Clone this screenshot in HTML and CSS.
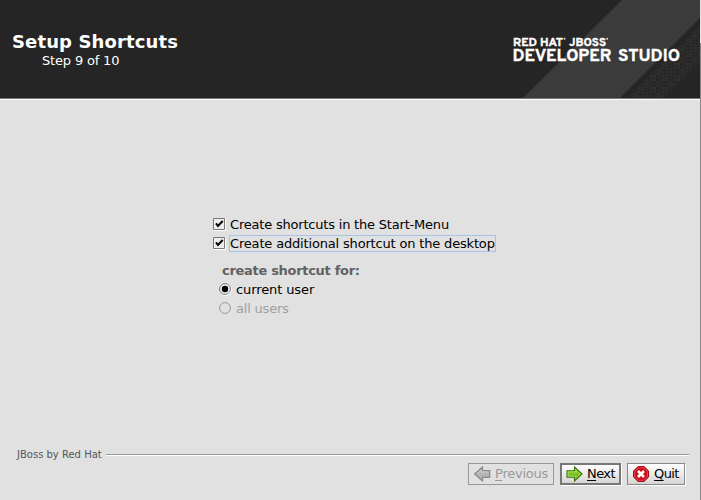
FILE: index.html
```html
<!DOCTYPE html>
<html lang="en">
<head>
<meta charset="utf-8">
<title>Setup Shortcuts</title>
<link rel="stylesheet" href="styles.css">
</head>
<body>
<div class="window">
  <header class="header">
    <div class="heading">
      <h1>Setup Shortcuts</h1>
      <p>Step 9 of 10</p>
    </div>
    <svg class="brand" width="201" height="98" viewBox="500 0 201 98">
      <defs>
        <pattern id="lattice" width="12" height="12" patternUnits="userSpaceOnUse">
          <path d="M0 3L3 0H9L12 3V9L9 12H3L0 9ZM0 0L12 12M12 0L0 12" fill="none" stroke="#343434" stroke-width=".8"/>
          <circle cx="6" cy="6" r="3" fill="none" stroke="#343434" stroke-width=".8"/>
        </pattern>
      </defs>
      <path d="M623 0H701V18L621 98H524Z" fill="#3b3b3b"/>
      <path d="M701 26V63L665 98H628Z" fill="url(#lattice)"/>
      <g class="brand-text">
        <text x="514" y="45.5" font-size="10.5" textLength="50" lengthAdjust="spacingAndGlyphs">RED HAT</text>
        <text x="570" y="45.5" font-size="10.5" textLength="37" lengthAdjust="spacingAndGlyphs">JBOSS</text>
        <text x="513.5" y="61" font-size="16" textLength="99" lengthAdjust="spacingAndGlyphs">DEVELOPER</text>
        <text x="619" y="61" font-size="16" textLength="62" lengthAdjust="spacingAndGlyphs">STUDIO</text>
      </g>
      <circle cx="565.5" cy="38.7" r="1" fill="#ddd"/>
      <circle cx="608.2" cy="38.7" r="1" fill="#ddd"/>
    </svg>
  </header>
  <main class="content">
    <label class="row"><svg class="mark" width="13" height="13"><path d="M12.5 1V12.5H1" fill="none" stroke="#fff"/><path d="M.5.5H11.5V11.5H.5Z" fill="#eee" stroke="#777"/><path d="M3 5.3L5 8L9.7 3" fill="none" stroke="#000" stroke-width="2"/></svg><span class="label">Create shortcuts in the Start-Menu</span></label>
    <label class="row"><svg class="mark" width="13" height="13"><path d="M12.5 1V12.5H1" fill="none" stroke="#fff"/><path d="M.5.5H11.5V11.5H.5Z" fill="#eee" stroke="#777"/><path d="M3 5.3L5 8L9.7 3" fill="none" stroke="#000" stroke-width="2"/></svg><span class="label focused">Create additional shortcut on the desktop</span></label>
    <h2>create shortcut for:</h2>
    <label class="row radio"><svg class="mark" width="13" height="13"><circle cx="6.8" cy="6.8" r="5.6" fill="#fff" stroke="#fff"/><circle cx="6" cy="6" r="5.4" fill="#eee" stroke="#777"/><circle cx="6" cy="6" r="3.2"/></svg><span class="label current">current user</span></label>
    <label class="row radio disabled"><svg class="mark" width="13" height="13"><circle cx="6" cy="6" r="5.4" fill="none" stroke="#999"/></svg><span class="label">all users</span></label>
  </main>
  <footer class="footer">
    <div class="divider"><span>JBoss by Red Hat</span><i></i></div>
    <div class="buttons">
      <button class="previous" disabled><svg width="17" height="16"><path d="M.7 8L8.5 1V4.7H15.7V11.3H8.5V15Z" fill="#b5b5b5" stroke="#888" stroke-width="1.2"/><path d="M3 8L7.3 4V6H14.2" fill="none" stroke="#ccc"/></svg><span><u>P</u>revious</span></button>
      <button class="next"><svg width="17" height="16"><defs><linearGradient id="green" x2="0" y2="1"><stop stop-color="#a4df3b"/><stop offset="1" stop-color="#55a616"/></linearGradient></defs><path d="M16 8L8.5 1V4.7H1V11.3H8.5V15Z" fill="url(#green)" stroke="#39750b" stroke-width="1.1"/><path d="M2.2 10.2V5.9H9.7V3.8L14.2 8L9.7 12.2V10.2Z" fill="none" stroke="#a9df5d" stroke-width=".8"/></svg><span><u>N</u>ext</span></button>
      <button class="quit"><svg width="17" height="16"><path d="M5 .6H11L15.6 5V11L11 15.4H5L.6 11V5Z" fill="#cc1019" stroke="#a4000a"/><path d="M5.4 1.7H10.6L14.5 5.4V10.6L10.6 14.3H5.4L1.6 10.6V5.4Z" fill="none" stroke="#e66068" stroke-width=".7"/><path d="M5 5L11 11M11 5L5 11" stroke="#fff" stroke-width="2.7"/></svg><span><u>Q</u>uit</span></button>
    </div>
  </footer>
</div>
</body>
</html>
```

FILE: styles.css
```css
* { box-sizing: border-box; }
body { margin: 0; font: 13px/19px "DejaVu Sans", sans-serif; color: #000; }
.window { width: 701px; height: 500px; display: flex; flex-direction: column; background: linear-gradient(#888, #888) 700px 43px / 1px 457px no-repeat, #e1e1e1; overflow: hidden; }
.header { width: 700px; height: 100px; display: flex; justify-content: space-between; background: #252525; border-bottom: 1px solid #fff; box-shadow: inset 0 -1px #777; color: #fff; }
.heading { padding: 31px 0 0 12px; }
h1 { margin: 0; font-size: 18px; line-height: 22px; letter-spacing: .13px; white-space: nowrap; }
.heading p { margin: 0 0 0 30px; line-height: 16px; letter-spacing: -.17px; }
.brand { flex: none; }
.brand-text { font-family: "Overpass", Roboto, sans-serif; font-weight: 700; fill: #fff; stroke: #fff; stroke-width: .35px; }
.content { height: 349px; padding: 115px 0 0 213px; }
.row { display: flex; align-items: center; height: 19px; white-space: nowrap; }
.mark { flex: none; margin-right: 3px; }
.label { padding: 0 0 0 1px; line-height: 15px; border: 1px solid transparent; letter-spacing: -.2px; }
.row:not(.radio) .label { padding-left: 0; }
.focused { border-color: #a3c5ea; letter-spacing: -.17px; }
h2 { margin: 9px 0 0 9px; font-size: 13px; line-height: 18px; letter-spacing: -.3px; color: #626262; }
.radio { padding-left: 6px; }
.radio .mark { margin-right: 2px; }
.current { letter-spacing: -.1px; }
.disabled { color: #a0a0a0; }
.footer { padding-right: 12px; }
.divider { display: flex; align-items: center; height: 12px; padding-left: 17px; font-size: 10px; line-height: 12px; color: #555; }
.divider span { width: 89px; white-space: nowrap; }
.divider i { flex: 1; height: 2px; background: #999; border-bottom: 1px solid #fff; }
.buttons { display: flex; justify-content: flex-end; gap: 6px; padding: 2px 4px 0 0; }
button { display: flex; align-items: center; height: 22px; margin: 0; padding: 0 0 0 5px; border: 1px solid #888; background: linear-gradient(#fff, #d5d5d5); box-shadow: 1px 1px #fff; font: 13px/18px "DejaVu Sans", sans-serif; color: #000; white-space: nowrap; }
button svg { flex: none; margin-right: 4px; }
u { text-decoration-thickness: 1px; text-underline-offset: 2px; }
.previous { width: 86px; background: none; border-color: #999; box-shadow: none; color: #999; letter-spacing: -.25px; }
.next { width: 61px; padding-left: 4px; border: 2px solid #777; letter-spacing: -.6px; }
.quit { width: 58px; letter-spacing: -.6px; }
```
